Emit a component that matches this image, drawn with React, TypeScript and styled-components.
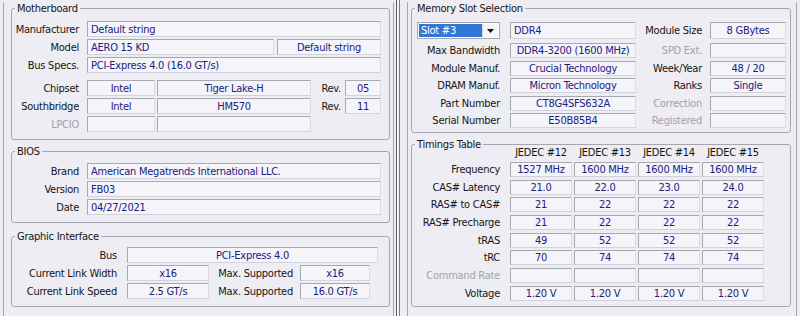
import styled, { createGlobalStyle } from 'styled-components';

const GlobalStyle = createGlobalStyle`
  html, body { margin: 0; padding: 0; }
  body {
    background: #ededf3;
    font-family: "DejaVu Sans Condensed", "Liberation Sans", Arial, sans-serif;
    font-stretch: condensed;
    font-size: 11px;
    letter-spacing: -0.25px;
  }
`;

const Screen = styled.div`
  display: flex;
  width: 800px;
  height: 316px;
  overflow: hidden;
  background: #ededf3;
  color: #151515;
`;

const Window = styled.div<{ $w: number; $pl: number }>`
  flex: none;
  width: ${(p) => p.$w}px;
  padding-left: ${(p) => p.$pl}px;
  box-sizing: border-box;
`;

const Divider = styled.div`
  flex: none;
  width: 4px;
  box-sizing: border-box;
  border-left: 1px solid #5c5c60;
  border-right: 1px solid #7a7a80;
  background: #f6f6fa;
`;

const TabPage = styled.div<{ $w: number; $pl: number }>`
  width: ${(p) => p.$w}px;
  height: 340px;
  box-sizing: border-box;
  padding-left: ${(p) => p.$pl}px;
  border-left: 1px solid #a6a6b0;
  border-right: 1px solid #a6a6b0;
`;

const Group = styled.fieldset<{ $w: number; $mt: number; $pt: number; $pb: number }>`
  width: ${(p) => p.$w}px;
  margin: ${(p) => p.$mt}px 0 0 0;
  padding: ${(p) => p.$pt}px 0 ${(p) => p.$pb}px 0;
  box-sizing: border-box;
  min-inline-size: 0;
  border: 1px solid #a6a6b0;
  border-radius: 3px;
`;

const Legend = styled.legend`
  margin-left: 3px;
  padding: 0 2px;
  font-size: 11px;
  line-height: 13px;
  color: #151515;
`;

const Row = styled.div<{ $h: number; $mt?: number }>`
  display: flex;
  align-items: center;
  height: ${(p) => p.$h}px;
  margin-top: ${(p) => p.$mt ?? 0}px;
`;

const Label = styled.span<{ $w: number; $pr?: number; $dim?: boolean }>`
  flex: none;
  width: ${(p) => p.$w}px;
  padding-right: ${(p) => p.$pr ?? 8}px;
  box-sizing: border-box;
  text-align: right;
  white-space: nowrap;
  color: ${(p) => (p.$dim ? '#a2a2aa' : '#151515')};
`;

const Field = styled.div<{ $w: number; $ml?: number; $center?: boolean }>`
  flex: none;
  width: ${(p) => p.$w}px;
  height: 100%;
  margin-left: ${(p) => p.$ml ?? 0}px;
  padding: 0 3px;
  box-sizing: border-box;
  border-top: 1px solid #a8a8b2;
  border-left: 1px solid #a8a8b2;
  border-right: 1px solid #dcdce4;
  border-bottom: 1px solid #d2d2da;
  background: #f4f4f9;
  color: #202080;
  white-space: nowrap;
  overflow: hidden;
  display: flex;
  align-items: center;
  justify-content: ${(p) => (p.$center ? 'center' : 'flex-start')};
`;

const Dropdown = styled.div`
  flex: none;
  display: flex;
  width: 83px;
  height: 100%;
  margin-left: 5px;
  box-sizing: border-box;
  border: 1px solid #a8a8b2;
  background: #fff;
  padding: 1px;
`;

const Selected = styled.div`
  flex: 1;
  display: flex;
  align-items: center;
  padding-left: 2px;
  background: #3277d8;
  color: #fff;
`;

const Arrow = styled.div`
  flex: none;
  width: 15px;
  display: flex;
  align-items: center;
  justify-content: center;
  background: #f6f6f8;
  border-left: 1px solid #d8d8e0;
`;

const ColHead = styled.span`
  flex: none;
  width: 62px;
  margin-left: 2px;
  text-align: center;
  white-space: nowrap;
  color: #151515;
`;

const mbLabel = 75;
const memLabel = 98;

const timings: { label: string; values: string[]; dim?: boolean }[] = [
  { label: 'Frequency', values: ['1527 MHz', '1600 MHz', '1600 MHz', '1600 MHz'] },
  { label: 'CAS# Latency', values: ['21.0', '22.0', '23.0', '24.0'] },
  { label: 'RAS# to CAS#', values: ['21', '22', '22', '22'] },
  { label: 'RAS# Precharge', values: ['21', '22', '22', '22'] },
  { label: 'tRAS', values: ['49', '52', '52', '52'] },
  { label: 'tRC', values: ['70', '74', '74', '74'] },
  { label: 'Command Rate', values: ['', '', '', ''], dim: true },
  { label: 'Voltage', values: ['1.20 V', '1.20 V', '1.20 V', '1.20 V'] },
];

const memRows: { label: string; value: string; side: string; sideValue: string; dim?: boolean }[] = [
  { label: 'Max Bandwidth', value: 'DDR4-3200 (1600 MHz)', side: 'SPD Ext.', sideValue: '', dim: true },
  { label: 'Module Manuf.', value: 'Crucial Technology', side: 'Week/Year', sideValue: '48 / 20' },
  { label: 'DRAM Manuf.', value: 'Micron Technology', side: 'Ranks', sideValue: 'Single' },
  { label: 'Part Number', value: 'CT8G4SFS632A', side: 'Correction', sideValue: '', dim: true },
  { label: 'Serial Number', value: 'E50B85B4', side: 'Registered', sideValue: '', dim: true },
];

export default function App() {
  return (
    <>
      <GlobalStyle />
      <Screen>
        <Window $w={396} $pl={3}>
          <TabPage $w={391} $pl={7}>
            <Group $w={379} $mt={2} $pt={6} $pb={7}>
              <Legend>Motherboard</Legend>
              <Row $h={16}>
                <Label $w={mbLabel}>Manufacturer</Label>
                <Field $w={294}>Default string</Field>
              </Row>
              <Row $h={16} $mt={2}>
                <Label $w={mbLabel}>Model</Label>
                <Field $w={187}>AERO 15 KD</Field>
                <Field $w={104} $ml={3} $center>Default string</Field>
              </Row>
              <Row $h={16} $mt={2}>
                <Label $w={mbLabel}>Bus Specs.</Label>
                <Field $w={294}>PCI-Express 4.0 (16.0 GT/s)</Field>
              </Row>
              <Row $h={16} $mt={7}>
                <Label $w={mbLabel}>Chipset</Label>
                <Field $w={68} $center>Intel</Field>
                <Field $w={154} $ml={2} $center>Tiger Lake-H</Field>
                <Label $w={34} $pr={4}>Rev.</Label>
                <Field $w={36} $center>05</Field>
              </Row>
              <Row $h={16} $mt={2}>
                <Label $w={mbLabel}>Southbridge</Label>
                <Field $w={68} $center>Intel</Field>
                <Field $w={154} $ml={2} $center>HM570</Field>
                <Label $w={34} $pr={4}>Rev.</Label>
                <Field $w={36} $center>11</Field>
              </Row>
              <Row $h={16} $mt={2}>
                <Label $w={mbLabel} $dim>LPCIO</Label>
                <Field $w={68} />
                <Field $w={154} $ml={2} />
              </Row>
            </Group>

            <Group $w={379} $mt={5} $pt={5} $pb={7}>
              <Legend>BIOS</Legend>
              <Row $h={16}>
                <Label $w={mbLabel}>Brand</Label>
                <Field $w={294}>American Megatrends International LLC.</Field>
              </Row>
              <Row $h={16} $mt={2}>
                <Label $w={mbLabel}>Version</Label>
                <Field $w={294}>FB03</Field>
              </Row>
              <Row $h={16} $mt={2}>
                <Label $w={mbLabel}>Date</Label>
                <Field $w={294}>04/27/2021</Field>
              </Row>
            </Group>

            <Group $w={379} $mt={7} $pt={4} $pb={7}>
              <Legend>Graphic Interface</Legend>
              <Row $h={16}>
                <Label $w={115} $pr={10}>Bus</Label>
                <Field $w={251} $center>PCI-Express 4.0</Field>
              </Row>
              <Row $h={16} $mt={2}>
                <Label $w={115} $pr={10}>Current Link Width</Label>
                <Field $w={82} $center>x16</Field>
                <Label $w={91} $pr={7}>Max. Supported</Label>
                <Field $w={70} $center>x16</Field>
              </Row>
              <Row $h={16} $mt={2}>
                <Label $w={115} $pr={10}>Current Link Speed</Label>
                <Field $w={82} $center>2.5 GT/s</Field>
                <Label $w={91} $pr={7}>Max. Supported</Label>
                <Field $w={70} $center>16.0 GT/s</Field>
              </Row>
            </Group>
          </TabPage>
        </Window>

        <Divider />

        <Window $w={400} $pl={7}>
          <TabPage $w={390} $pl={3}>
            <Group $w={380} $mt={2} $pt={7} $pb={4}>
              <Legend>Memory Slot Selection</Legend>
              <Row $h={17}>
                <Dropdown>
                  <Selected>Slot #3</Selected>
                  <Arrow>
                    <svg width="7" height="4" viewBox="0 0 7 4">
                      <path d="M0 0h7L3.5 4z" fill="#111" />
                    </svg>
                  </Arrow>
                </Dropdown>
                <Field $w={126} $ml={10}>DDR4</Field>
                <Label $w={74}>Module Size</Label>
                <Field $w={76} $center>8 GBytes</Field>
              </Row>
              {memRows.map((r, i) => (
                <Row key={r.label} $h={15} $mt={i === 0 ? 4 : 2.5}>
                  <Label $w={memLabel} $pr={10}>{r.label}</Label>
                  <Field $w={126} $center>{r.value}</Field>
                  <Label $w={74} $dim={r.dim}>{r.side}</Label>
                  <Field $w={76} $center>{r.sideValue}</Field>
                </Row>
              ))}
            </Group>

            <Group $w={380} $mt={5} $pt={0} $pb={5}>
              <Legend>Timings Table</Legend>
              <Row $h={12} $mt={-5}>
                <Label $w={memLabel - 2} />
                {['JEDEC #12', 'JEDEC #13', 'JEDEC #14', 'JEDEC #15'].map((h) => (
                  <ColHead key={h}>{h}</ColHead>
                ))}
              </Row>
              {timings.map((t, i) => (
                <Row key={t.label} $h={15} $mt={i === 0 ? 4 : 2.7}>
                  <Label $w={memLabel} $pr={10} $dim={t.dim}>{t.label}</Label>
                  {t.values.map((v, j) => (
                    <Field key={j} $w={62} $ml={j === 0 ? 0 : 2} $center>{v}</Field>
                  ))}
                </Row>
              ))}
            </Group>
          </TabPage>
        </Window>
      </Screen>
    </>
  );
}
